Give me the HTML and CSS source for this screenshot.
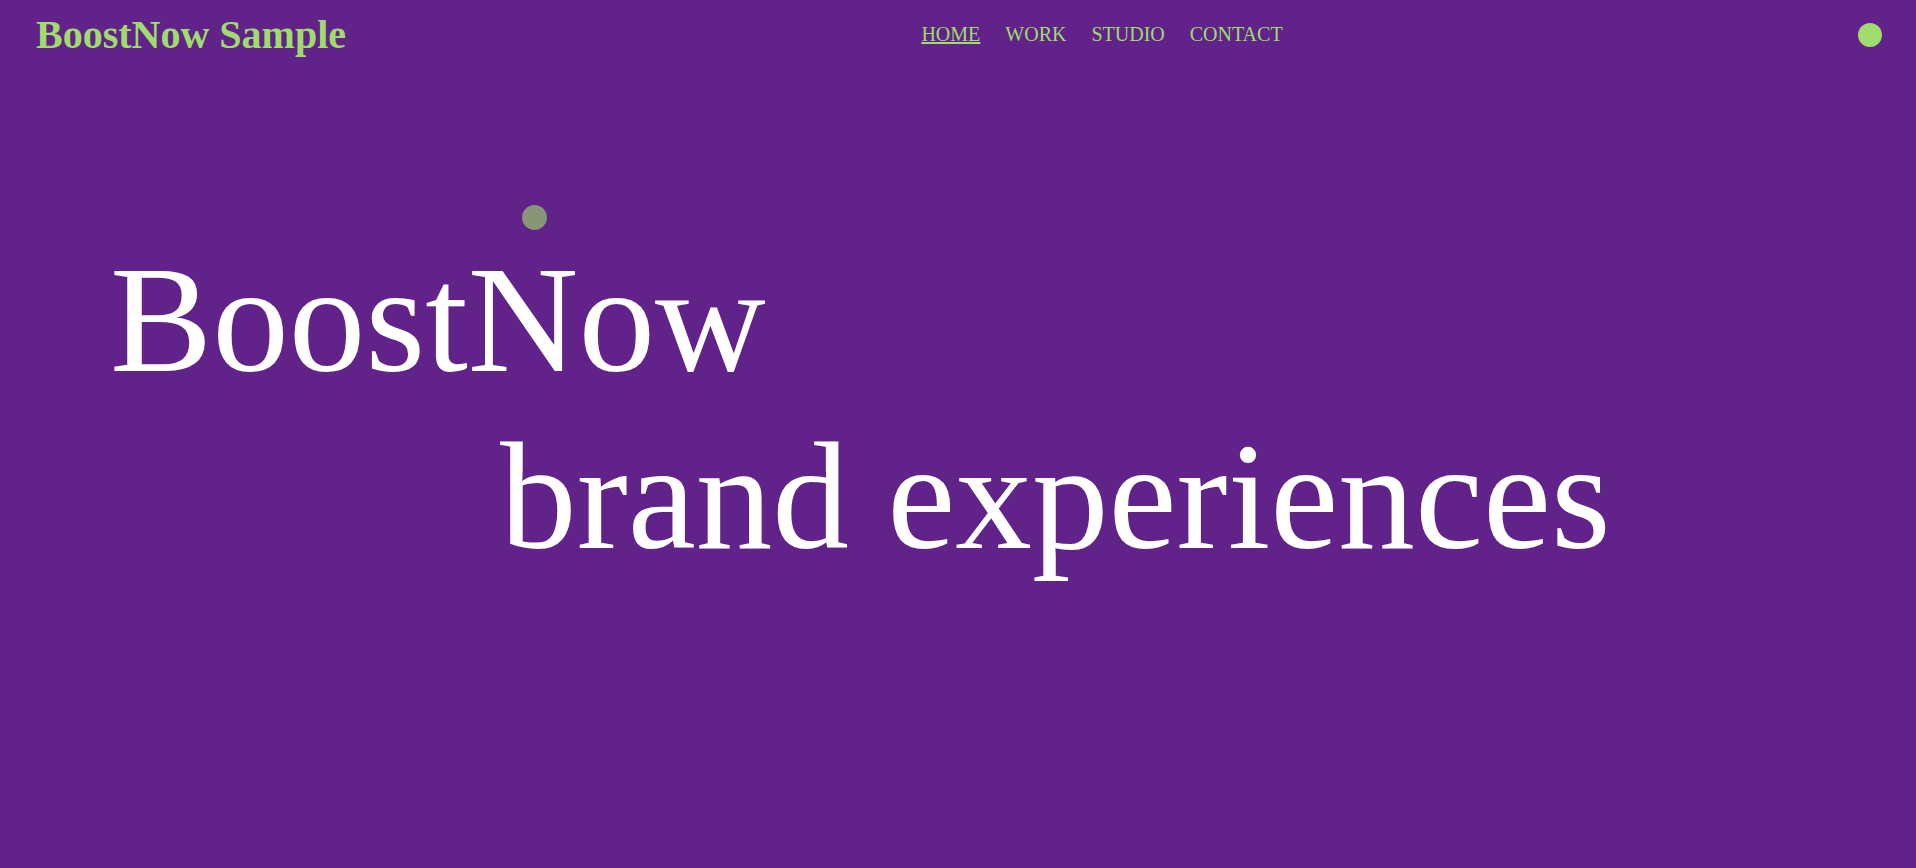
FILE: index.html
```html
<!DOCTYPE html>
<html lang="en">
<head>
<meta charset="utf-8">
<title>BoostNow Sample</title>
<link rel="stylesheet" href="styles.css">
</head>
<body>
<header class="site-header">
  <a class="logo" href="#">BoostNow Sample</a>
  <nav class="main-nav">
    <a class="nav-link active" href="#">HOME</a>
    <a class="nav-link" href="#">WORK</a>
    <a class="nav-link" href="#">STUDIO</a>
    <a class="nav-link" href="#">CONTACT</a>
  </nav>
  <span class="menu-dot"></span>
</header>
<main class="hero">
  <h1 class="hero-title">
    <span class="line line-one">BoostNow</span>
    <span class="line line-two">brand experiences</span>
  </h1>
</main>
<div class="cursor-dot"></div>
</body>
</html>
```

FILE: styles.css
```css
html, body {
  margin: 0;
  padding: 0;
}

body {
  background: #61238a;
  font-family: "Liberation Serif", "Times New Roman", serif;
  height: 868px;
  overflow: hidden;
  position: relative;
}

.site-header {
  display: flex;
  justify-content: space-between;
  align-items: center;
  padding: 11px 34px 11px 36px;
}

.logo {
  font-size: 40px;
  font-weight: bold;
  color: #a0dc6c;
  text-decoration: none;
  line-height: normal;
}

.main-nav {
  display: flex;
  gap: 25px;
}

.nav-link {
  font-size: 20px;
  color: #a0dc6c;
  text-decoration: none;
}

.nav-link.active {
  text-decoration: underline;
}

.menu-dot {
  width: 24px;
  height: 24px;
  border-radius: 50%;
  background: #a0dc6c;
}

.hero {
  padding-top: 162px;
}

.hero-title {
  margin: 0;
  font-weight: normal;
  font-size: 8vw;
  line-height: normal;
  color: #ffffff;
}

.line {
  display: block;
  white-space: nowrap;
}

.line-one {
  padding-left: 110px;
}

.line-two {
  padding-left: 500px;
}

.cursor-dot {
  position: absolute;
  left: 522px;
  top: 205px;
  width: 25px;
  height: 25px;
  border-radius: 50%;
  background: #a0dc6c;
  opacity: 0.62;
}
```
